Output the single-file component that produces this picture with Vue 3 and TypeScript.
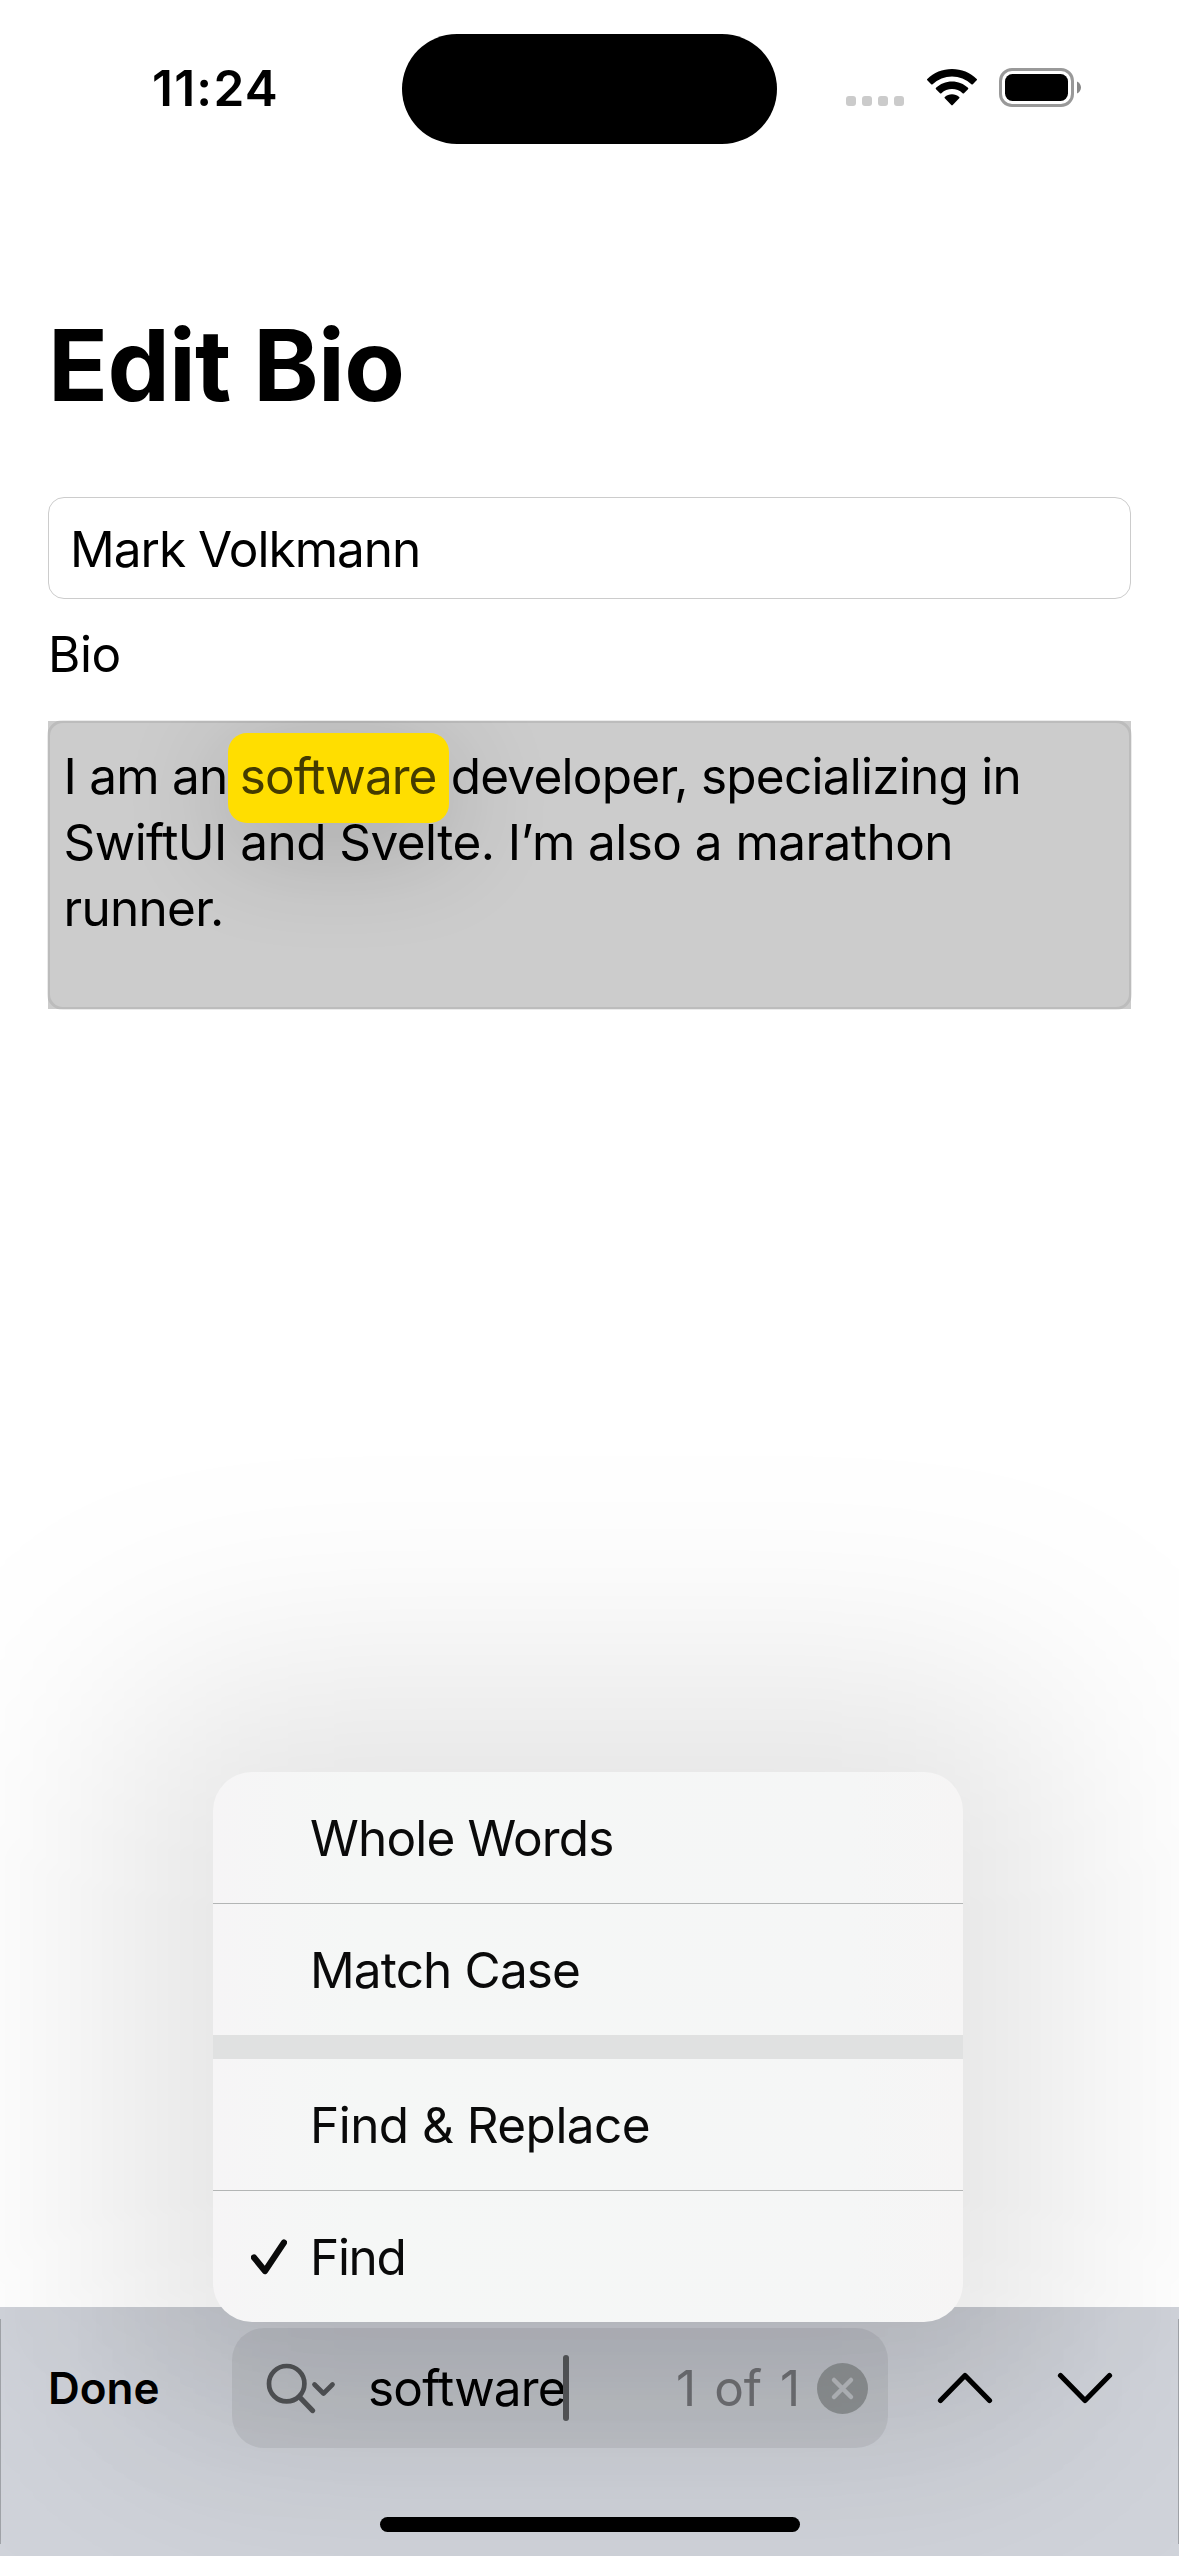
<script setup lang="ts">
import { ref } from 'vue'

interface MenuItem {
  label: string
  checked: boolean
  spacing: string
}

const name = ref('Mark Volkmann')
const query = ref('software')

const menuGroups: MenuItem[][] = [
  [
    { label: 'Whole Words', checked: false, spacing: '-0.83px' },
    { label: 'Match Case', checked: false, spacing: '-0.85px' },
  ],
  [
    { label: 'Find & Replace', checked: false, spacing: '-0.54px' },
    { label: 'Find', checked: true, spacing: '-1.3px' },
  ],
]
</script>

<template>
  <div class="screen">
    <header class="status">
      <span class="time">11:24</span>
      <span class="island"></span>
      <div class="indicators">
        <div class="cell"><i v-for="n in 4" :key="n"></i></div>
        <svg class="wifi" viewBox="0 0 50 37" width="50" height="37">
          <path d="M25 0C34.500 0 43.300 3.600 49.700 9.900Q50.400 10.600 49.700 11.300L45.800 15.300Q45.100 15.900 44.400 15.300A28 28 0 0 0 5.600 15.300Q4.900 15.900 4.200 15.300L.3 11.300Q-.4 10.600 .3 9.900C6.700 3.600 15.500 0 25 0Z" />
          <path d="M25 12.500C31.200 12.500 36.800 14.900 41 18.800Q41.700 19.500 41 20.200L37 24.200Q36.300 24.800 35.600 24.200A15.800 15.800 0 0 0 14.400 24.200Q13.700 24.800 13 24.200L9 20.200Q8.300 19.500 9 18.800C13.200 14.900 18.800 12.500 25 12.500Z" />
          <path d="M25 25.200C27.700 25.200 30.200 26.200 32.200 27.900Q32.900 28.600 32.200 29.300L25.700 36.100Q25 36.800 24.300 36.100L17.800 29.300Q17.100 28.600 17.800 27.900C19.800 26.200 22.300 25.200 25 25.200Z" />
        </svg>
        <svg class="battery" viewBox="0 0 82 39" width="82" height="39">
          <rect x="1.500" y="1.500" width="72" height="36" rx="11.500" fill="none" stroke="#999" stroke-width="3" />
          <rect x="6" y="6" width="63" height="27" rx="7.500" />
          <path d="M78 13.500C80.500 14.500 82 17 82 19.500S80.500 24.500 78 25.500Z" fill="#888" />
        </svg>
      </div>
    </header>

    <main class="form">
      <h1>Edit Bio</h1>
      <div class="field">{{ name }}</div>
      <div class="label">Bio</div>
      <div class="editor">
        <div class="copy">
          <div class="line l1">I am an <span class="hit">{{ query }}</span> developer, specializing in</div>
          <div class="line l2">SwiftUI and Svelte. I’m also a marathon</div>
          <div class="line l3">runner.</div>
        </div>
      </div>
    </main>

    <footer class="findbar">
      <div class="controls">
        <span class="done">Done</span>
        <div class="search">
          <svg class="glass" viewBox="0 0 70 54" width="70" height="54" fill="none" stroke="#515356" stroke-width="4.700" stroke-linecap="round" stroke-linejoin="round">
            <circle cx="20.700" cy="22.700" r="17.700" />
            <path d="M33.500 36L46.500 49.500" stroke-width="5.300" />
            <path d="M48.500 23.500L57.500 32.500L66.500 23.500" />
          </svg>
          <span class="query">{{ query }}</span>
          <span class="caret"></span>
          <span class="count">1 of 1</span>
          <svg class="clear" viewBox="0 0 51 51" width="51" height="51">
            <circle cx="25.500" cy="25.500" r="25.500" fill="#8d9193" />
            <path d="M17 17L34 34M34 17L17 34" stroke="#b6b9bd" stroke-width="4.500" stroke-linecap="round" />
          </svg>
        </div>
        <svg class="up" viewBox="0 0 56 34" width="56" height="34">
          <path d="M3.500 29.500L28 4.500L52.500 29.500" />
        </svg>
        <svg class="down" viewBox="0 0 56 34" width="56" height="34">
          <path d="M3.500 4.500L28 29.500L52.500 4.500" />
        </svg>
      </div>
      <div class="home"></div>
    </footer>

    <div class="menu-shadow"></div>
    <div class="menu">
      <div v-for="(group, g) in menuGroups" :key="g" class="group">
        <div v-for="item in group" :key="item.label" class="item">
          <div class="mark">
            <svg v-if="item.checked" viewBox="0 0 36 36" width="36" height="36">
              <path d="M3 18.500L14 32L33 3.500" />
            </svg>
          </div>
          <span :style="{ letterSpacing: item.spacing }">{{ item.label }}</span>
        </div>
      </div>
    </div>
  </div>
</template>

<style>
body {
  background: #fff;
}
</style>

<style scoped>
.screen {
  position: relative;
  display: flex;
  flex-direction: column;
  width: 1179px;
  height: 2556px;
  overflow: hidden;
  background: #fff;
  color: #000;
  font-family: Inter, 'Liberation Sans', sans-serif;
  font-size: 49.500px;
  letter-spacing: -0.500px;
  white-space: pre;
}

.status {
  display: flex;
  height: 177px;
}
.time {
  width: 402px;
  padding-left: 152px;
  box-sizing: border-box;
  line-height: 176px;
  font-weight: 600;
  letter-spacing: 1.250px;
}
.island {
  width: 375px;
  height: 110px;
  margin-top: 34px;
  border-radius: 56px;
  background: #000;
}
.indicators {
  display: flex;
  margin: 68px 0 0 69px;
}
.cell {
  display: flex;
  gap: 6px;
  padding-top: 28px;
}
.cell i {
  width: 10px;
  height: 10px;
  border-radius: 3px;
  background: #cbcbcb;
}
.wifi {
  margin: 1px 0 0 22.500px;
}
.battery {
  margin-left: 22.500px;
}

.form {
  flex: 1;
  padding: 0 48px;
}
h1 {
  margin: 0;
  height: 320px;
  font-size: 99px;
  line-height: 376px;
  font-weight: 700;
  letter-spacing: -0.750px;
}
.field {
  box-sizing: border-box;
  height: 102px;
  padding-left: 21px;
  border: 1px solid #ccc;
  border-radius: 16px;
  line-height: 102px;
  letter-spacing: -0.980px;
}
.label {
  height: 122px;
  line-height: 110px;
}
.editor {
  position: relative;
  height: 288px;
  background: #ccc;
}
.editor::after {
  content: '';
  position: absolute;
  inset: -1px;
  border: 3px solid rgba(0, 0, 0, 0.08);
  border-radius: 16px;
}
.copy {
  isolation: isolate;
  box-sizing: border-box;
  height: 288px;
  padding: 22px 0 0 15.500px;
  overflow: hidden;
}
.line {
  height: 66px;
  line-height: 66px;
}
.l1 {
  letter-spacing: -0.750px;
}
.l2 {
  letter-spacing: -0.550px;
}
.l3 {
  letter-spacing: -0.700px;
}
.hit {
  position: relative;
  margin: 0 1px 0 -1px;
  letter-spacing: -0.950px;
  color: #443b00;
}
.hit::before {
  content: '';
  position: absolute;
  z-index: -1;
  left: -12px;
  right: -12px;
  top: -13px;
  height: 90px;
  border-radius: 19px;
  background: #ffde00;
  box-shadow: 0 20px 110px rgba(0, 0, 0, 0.2);
}

.findbar {
  position: relative;
  isolation: isolate;
  overflow: hidden;
  box-sizing: border-box;
  height: 249px;
  padding-top: 21px;
  background:
    linear-gradient(#a0a3a8, #a0a3a8) 0 12px / 1px 225px no-repeat,
    linear-gradient(#a0a3a8, #a0a3a8) 100% 12px / 1px 225px no-repeat,
    #d0d3da;
}
/* the menu's shadow as it shows through the translucent bar */
.findbar::before {
  content: '';
  position: absolute;
  z-index: -1;
  left: 153px;
  right: 156px;
  top: -475px;
  height: 550px;
  border-radius: 60px;
  background: rgba(0, 0, 0, 0.06);
  filter: blur(80px);
}
.controls {
  display: flex;
  align-items: center;
  height: 120px;
}
.done {
  width: 184px;
  padding-left: 48px;
  font-size: 44px;
  font-weight: 600;
  letter-spacing: 0;
}
.search {
  display: flex;
  align-items: center;
  width: 656px;
  height: 120px;
  border-radius: 32px;
  background: rgba(0, 0, 0, 0.065);
}
.glass {
  margin-left: 34px;
}
.query {
  width: 195px;
  margin-left: 32px;
  letter-spacing: -0.800px;
}
.caret {
  width: 6px;
  height: 66px;
  border-radius: 3px;
  background: #55575a;
}
.count {
  flex: 1;
  padding-right: 17px;
  text-align: right;
  word-spacing: 4.500px;
  letter-spacing: -0.200px;
  color: #6e6f73;
}
.clear {
  margin-right: 20px;
}
.up {
  margin-left: 49px;
}
.down {
  margin-left: 64px;
}
.up path,
.down path {
  fill: none;
  stroke: #000;
  stroke-width: 5.200px;
  stroke-linecap: round;
  stroke-linejoin: round;
}
.home {
  width: 420px;
  height: 15px;
  margin: 69px 0 0 380px;
  border-radius: 8px;
  background: #000;
}

.menu-shadow {
  position: absolute;
  left: 113px;
  top: 1676px;
  width: 950px;
  height: 756px;
  border-radius: 100px;
  background: rgba(0, 0, 0, 0.107);
  filter: blur(115px);
}
.menu {
  position: absolute;
  left: 213px;
  top: 1772px;
  width: 750px;
  height: 550px;
  border-radius: 39px;
  background: linear-gradient(90deg, #f6f5f6, #f5f7f6 20%, #f5f6f6 85%, #f6f5f5);
  color: #0a0a0a;
}
.group + .group {
  border-top: 24px solid #e0e1e1;
}
.item {
  display: flex;
  align-items: center;
  height: 131px;
}
.item + .item {
  border-top: 1px solid #b3b5b5;
}
.mark {
  width: 59px;
  height: 36px;
  padding-left: 38px;
}
.mark svg {
  display: block;
}
.mark path {
  fill: none;
  stroke: #0a0a0a;
  stroke-width: 6.200px;
  stroke-linecap: round;
  stroke-linejoin: round;
}
</style>
